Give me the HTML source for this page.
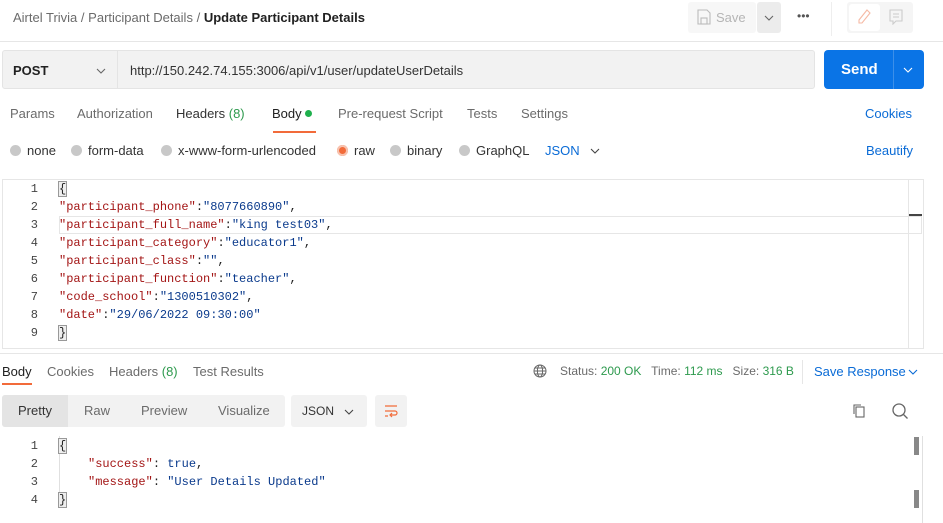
<!DOCTYPE html><html><head><style>
*{box-sizing:border-box;margin:0;padding:0}
body{width:943px;height:523px;background:#fff;font-family:"Liberation Sans",sans-serif;font-size:13px;color:#212121;position:relative;overflow:hidden}
.a{position:absolute;white-space:nowrap}
.g{color:#6b6b6b}
.mono{font-family:"Liberation Mono",monospace;font-size:12px}
.ln{position:absolute;width:20px;text-align:right;color:#444;font-family:"Liberation Mono",monospace;font-size:12px}
.k{color:#a31515}.s{color:#0a3a8c}
.dot{display:inline-block;width:11px;height:11px;border-radius:50%;background:#c8c8c8;vertical-align:-1px;margin-right:6px}
</style></head><body>
<svg width="0" height="0" style="position:absolute"><defs><symbol id="chev" viewBox="0 0 10 6"><path d="M1 1l4 4 4-4" fill="none" stroke="currentColor" stroke-width="1.1"/></symbol></defs></svg>
<div class="a" style="left:13px;top:10px;font-size:13px"><span class="g">Airtel Trivia</span> <span class="g">/</span> <span class="g">Participant Details</span> <span class="g">/</span> <span style="color:#212121;font-weight:bold">Update Participant Details</span></div>
<div class="a" style="left:688px;top:2px;width:68px;height:31px;background:#f7f7f7;border-radius:3px;color:#b5b5b5;padding:8px 0 0 28px">Save</div>
<svg class="a" style="left:697px;top:9px" width="14" height="16" viewBox="0 0 14 16" fill="none" stroke="#bbb" stroke-width="1.1"><path d="M1 1h9l3 3v11H1z"/><rect x="4" y="9" width="6" height="6"/></svg>
<div class="a" style="left:757px;top:2px;width:24px;height:31px;background:#ececec;border-radius:3px"></div>
<svg class="a" style="left:764px;top:15px;color:#666" width="10" height="6"><use href="#chev"/></svg>
<div class="a" style="left:797px;top:9px;color:#555;font-size:12px">•••</div>
<div class="a" style="left:831px;top:2px;width:1px;height:34px;background:#eee"></div>
<div class="a" style="left:847px;top:2px;width:66px;height:31px;background:#f5f5f5;border-radius:3px"></div>
<div class="a" style="left:849px;top:4px;width:31px;height:27px;background:#fff;border-radius:3px"></div>
<svg class="a" style="left:857px;top:9px" width="14" height="16" viewBox="0 0 14 16" fill="none" stroke="#f6b9a4" stroke-width="1.1"><path d="M10 1l3 3-8 10H2v-3z"/></svg>
<svg class="a" style="left:889px;top:9px" width="14" height="16" viewBox="0 0 14 16" fill="none" stroke="#ccc" stroke-width="1.1"><path d="M1 1h12v11H7l-3 3v-3H1z M4 5h6M4 8h6"/></svg>
<div class="a" style="left:0;top:41px;width:943px;height:1px;background:#e6e6e6"></div>

<div class="a" style="left:2px;top:50px;width:813px;height:39px;background:#f2f2f2;border:1px solid #e4e4e4;border-radius:3px"></div>
<div class="a" style="left:117px;top:51px;width:1px;height:37px;background:#e4e4e4"></div>
<div class="a" style="left:13px;top:63px;font-weight:bold;font-size:13px">POST</div>
<svg class="a" style="left:96px;top:68px;color:#666" width="10" height="6"><use href="#chev"/></svg>
<div class="a" style="left:130px;top:63px;font-size:13px;color:#333">http://150.242.74.155:3006/api/v1/user/updateUserDetails</div>
<div class="a" style="left:824px;top:50px;width:100px;height:39px;background:#0a74e6;border-radius:4px"></div>
<div class="a" style="left:893px;top:50px;width:1px;height:39px;background:#3c8fe9"></div>
<div class="a" style="left:841px;top:61px;color:#fff;font-weight:bold;font-size:15px">Send</div>
<svg class="a" style="left:903px;top:67px;color:#fff" width="10" height="6"><use href="#chev"/></svg>

<div class="a g" style="left:10px;top:106px">Params</div>
<div class="a g" style="left:77px;top:106px">Authorization</div>
<div class="a" style="left:176px;top:106px;color:#333">Headers <span style="color:#2e9a4e">(8)</span></div>
<div class="a" style="left:272px;top:106px;color:#212121">Body <span style="display:inline-block;width:7px;height:7px;border-radius:50%;background:#1fb04d;vertical-align:1px"></span></div>
<div class="a" style="left:273px;top:131px;width:43px;height:2px;background:#f26b3a"></div>
<div class="a g" style="left:338px;top:106px">Pre-request Script</div>
<div class="a g" style="left:467px;top:106px">Tests</div>
<div class="a g" style="left:521px;top:106px">Settings</div>
<div class="a" style="left:865px;top:106px;color:#0a6bd6">Cookies</div>

<div class="a" style="left:10px;top:143px;color:#333"><span class="dot"></span>none</div>
<div class="a" style="left:71px;top:143px;color:#333"><span class="dot"></span>form-data</div>
<div class="a" style="left:161px;top:143px;color:#333"><span class="dot"></span>x-www-form-urlencoded</div>
<div class="a" style="left:337px;top:143px;color:#333"><span class="dot" style="background:#f26b3a;box-shadow:0 0 0 2px #f7c3b0 inset"></span>raw</div>
<div class="a" style="left:390px;top:143px;color:#333"><span class="dot"></span>binary</div>
<div class="a" style="left:459px;top:143px;color:#333"><span class="dot"></span>GraphQL</div>
<div class="a" style="left:545px;top:143px;color:#0a6bd6">JSON</div>
<svg class="a" style="left:590px;top:148px;color:#444" width="10" height="6"><use href="#chev"/></svg>
<div class="a" style="left:866px;top:143px;color:#0a6bd6">Beautify</div>

<div class="a" style="left:2px;top:179px;width:922px;height:170px;border:1px solid #e6e6e6"></div>
<div class="a" style="left:908px;top:180px;width:1px;height:168px;background:#e6e6e6"></div>
<div class="a" style="left:909px;top:214px;width:13px;height:2px;background:#444"></div>
<div class="a" style="left:59px;top:216px;width:863px;height:18px;border:1px solid #e6e6e6"></div>
<div class="ln" style="left:18px;top:182px">1</div><div class="a mono" style="left:59px;top:182px;background:#eee;outline:1px solid #999">{</div>
<div class="ln" style="left:18px;top:200px">2</div><div class="a mono" style="left:59px;top:200px"><span class="k">"participant_phone"</span>:<span class="s">"8077660890"</span>,</div>
<div class="ln" style="left:18px;top:218px">3</div><div class="a mono" style="left:59px;top:218px"><span class="k">"participant_full_name"</span>:<span class="s">"king test03"</span>,</div>
<div class="ln" style="left:18px;top:236px">4</div><div class="a mono" style="left:59px;top:236px"><span class="k">"participant_category"</span>:<span class="s">"educator1"</span>,</div>
<div class="ln" style="left:18px;top:254px">5</div><div class="a mono" style="left:59px;top:254px"><span class="k">"participant_class"</span>:<span class="s">""</span>,</div>
<div class="ln" style="left:18px;top:272px">6</div><div class="a mono" style="left:59px;top:272px"><span class="k">"participant_function"</span>:<span class="s">"teacher"</span>,</div>
<div class="ln" style="left:18px;top:290px">7</div><div class="a mono" style="left:59px;top:290px"><span class="k">"code_school"</span>:<span class="s">"1300510302"</span>,</div>
<div class="ln" style="left:18px;top:308px">8</div><div class="a mono" style="left:59px;top:308px"><span class="k">"date"</span>:<span class="s">"29/06/2022 09:30:00"</span></div>
<div class="ln" style="left:18px;top:326px">9</div><div class="a mono" style="left:59px;top:326px;background:#eee;outline:1px solid #999">}</div>

<div class="a" style="left:0;top:353px;width:943px;height:1px;background:#e6e6e6"></div>
<div class="a" style="left:2px;top:364px;color:#212121">Body</div>
<div class="a" style="left:2px;top:383px;width:30px;height:2px;background:#f26b3a"></div>
<div class="a g" style="left:47px;top:364px">Cookies</div>
<div class="a g" style="left:109px;top:364px">Headers <span style="color:#2e9a4e">(8)</span></div>
<div class="a g" style="left:193px;top:364px">Test Results</div>
<svg class="a" style="left:533px;top:364px" width="14" height="14" viewBox="0 0 14 14" fill="none" stroke="#666" stroke-width="1"><circle cx="7" cy="7" r="6"/><ellipse cx="7" cy="7" rx="2.6" ry="6"/><path d="M1 7h12M2 4h10M2 10h10"/></svg>
<div class="a g" style="left:560px;top:364px;font-size:12px">Status: <span style="color:#2e9a4e">200 OK</span>&nbsp;&nbsp; Time: <span style="color:#2e9a4e">112 ms</span>&nbsp;&nbsp; Size: <span style="color:#2e9a4e">316 B</span></div>
<div class="a" style="left:802px;top:360px;width:1px;height:24px;background:#e6e6e6"></div>
<div class="a" style="left:814px;top:364px;color:#0a6bd6">Save Response</div>
<svg class="a" style="left:908px;top:369px;color:#0a6bd6" width="10" height="6"><use href="#chev"/></svg>

<div class="a" style="left:2px;top:395px;width:283px;height:32px;background:#f2f2f2;border-radius:3px"></div>
<div class="a" style="left:2px;top:395px;width:66px;height:32px;background:#e4e4e4;border-radius:3px 0 0 3px"></div>
<div class="a" style="left:18px;top:403px;color:#333">Pretty</div>
<div class="a g" style="left:84px;top:403px">Raw</div>
<div class="a g" style="left:141px;top:403px">Preview</div>
<div class="a g" style="left:218px;top:403px">Visualize</div>
<div class="a" style="left:291px;top:395px;width:76px;height:32px;background:#f2f2f2;border-radius:3px"></div>
<div class="a" style="left:302px;top:404px;color:#333;font-size:12px">JSON</div>
<svg class="a" style="left:344px;top:409px;color:#444" width="10" height="6"><use href="#chev"/></svg>
<div class="a" style="left:375px;top:395px;width:32px;height:32px;background:#f2f2f2;border-radius:3px"></div>
<svg class="a" style="left:383px;top:403px" width="16" height="16" viewBox="0 0 16 16" fill="none" stroke="#f26b3a" stroke-width="1.2"><path d="M2 3h12M2 8h10a2 2 0 0 1 0 4H8M9 10l-2 2 2 2M2 13h3"/></svg>
<svg class="a" style="left:852px;top:403px" width="14" height="16" viewBox="0 0 14 16" fill="none" stroke="#666" stroke-width="1.1"><rect x="4" y="4" width="8" height="10"/><path d="M2 11V2h7"/></svg>
<svg class="a" style="left:891px;top:402px" width="18" height="18" viewBox="0 0 18 18" fill="none" stroke="#666" stroke-width="1.3"><circle cx="8" cy="8" r="6"/><path d="M12.5 12.5l4 4"/></svg>

<div class="a" style="left:59px;top:436px;width:1px;height:70px;background:#e0e0e0"></div>
<div class="a" style="left:922px;top:436px;width:1px;height:87px;background:#e0e0e0"></div>
<div class="a" style="left:914px;top:437px;width:5px;height:18px;background:#888"></div>
<div class="a" style="left:914px;top:490px;width:5px;height:18px;background:#888"></div>
<div class="ln" style="left:18px;top:439px">1</div><div class="a mono" style="left:59px;top:439px;background:#eee;outline:1px solid #999">{</div>
<div class="ln" style="left:18px;top:457px">2</div><div class="a mono" style="left:88px;top:457px"><span class="k">"success"</span>: <span style="color:#0a3a8c">true</span>,</div>
<div class="ln" style="left:18px;top:475px">3</div><div class="a mono" style="left:88px;top:475px"><span class="k">"message"</span>: <span class="s">"User Details Updated"</span></div>
<div class="ln" style="left:18px;top:493px">4</div><div class="a mono" style="left:59px;top:493px;background:#eee;outline:1px solid #999">}</div>
</body></html>
